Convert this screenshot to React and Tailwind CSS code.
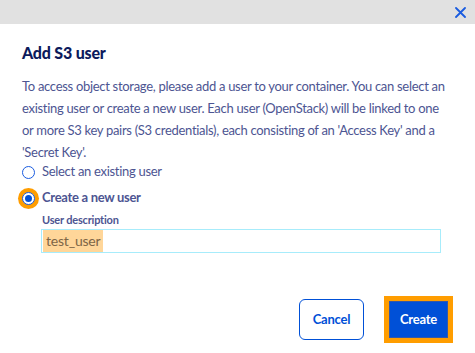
import React, { useState } from 'react';

const App = () => {
    const [mode, setMode] = useState('new');

    return (
        <div className="w-[475px] h-[353px] bg-white overflow-hidden font-['Lato',sans-serif]">
            {/* Top bar */}
            <div className="h-6 bg-[#e1e1e1] flex items-center justify-end pr-[9px]">
                <svg width="11" height="11" viewBox="0 0 11 11" className="text-[#1a5ce0]">
                    <path d="M1 1 L10 10 M10 1 L1 10" stroke="currentColor" strokeWidth="1.8" strokeLinecap="round" />
                </svg>
            </div>

            <div className="px-[22px] pt-[18px]">
                <h2 className="text-[16px] leading-[22px] font-black tracking-[-0.2px] text-[#0c1a5c]">Add S3 user</h2>

                <p className="mt-[11px] w-[426px] text-[13px] leading-[22px] tracking-[-0.3px] text-[#4d5592]">
                    To access object storage, please add a user to your container. You can select an existing user or create a new user. Each user (OpenStack) will be linked to one or more S3 key pairs (S3 credentials), each consisting of an 'Access Key' and a 'Secret Key'.
                </p>

                <div className="mt-[-1px] flex flex-col gap-[6px] text-[13px] tracking-[-0.3px] text-[#4d5592]">
                    <label className="flex items-center gap-[7px] h-[20px] cursor-pointer" onClick={() => setMode('existing')}>
                        <span className="w-[13px] h-[13px] rounded-full border border-[#1a5ce0] bg-white flex items-center justify-center">
                            {mode === 'existing' && <span className="w-[7px] h-[7px] rounded-full bg-[#0050d7]" />}
                        </span>
                        <span>Select an existing user</span>
                    </label>
                    <label className="flex items-center gap-[7px] h-[20px] cursor-pointer" onClick={() => setMode('new')}>
                        <span className={`w-[13px] h-[13px] rounded-full border border-[#1a5ce0] bg-white flex items-center justify-center ${mode === 'new' ? 'ring-4 ring-[#ff9d00]' : ''}`}>
                            {mode === 'new' && <span className="w-[7px] h-[7px] rounded-full bg-[#0050d7]" />}
                        </span>
                        <span className="font-bold">Create a new user</span>
                    </label>
                </div>

                <div className="ml-[19px] mt-[5px]">
                    <div className="pl-[1px] text-[11px] leading-[14px] font-bold tracking-[-0.2px] text-[#4d5592]">User description</div>
                    <div className="mt-[2px] w-[400px] h-[24px] border border-[#a7ecfb] flex items-stretch pl-[1px]">
                        <span className="bg-[#ffd699] text-[#7d6546] text-[14px] leading-[22px] tracking-[-0.2px] px-[3px]">test_user</span>
                    </div>
                </div>

                <div className="mt-[43px] flex justify-end items-center gap-[20px]">
                    <button className="w-[65px] h-[41px] rounded-[6px] border border-[#0050d7] text-[#0050d7] text-[13px] tracking-[-0.2px] font-bold bg-white">
                        Cancel
                    </button>
                    <div className="border-[5px] border-[#ff9d00]">
                        <button className="block w-[59px] h-[37px] bg-[#0050d7] text-white text-[13px] tracking-[-0.2px] font-bold border border-[#3558a8]">
                            Create
                        </button>
                    </div>
                </div>
            </div>
        </div>
    );
};

export default App;
